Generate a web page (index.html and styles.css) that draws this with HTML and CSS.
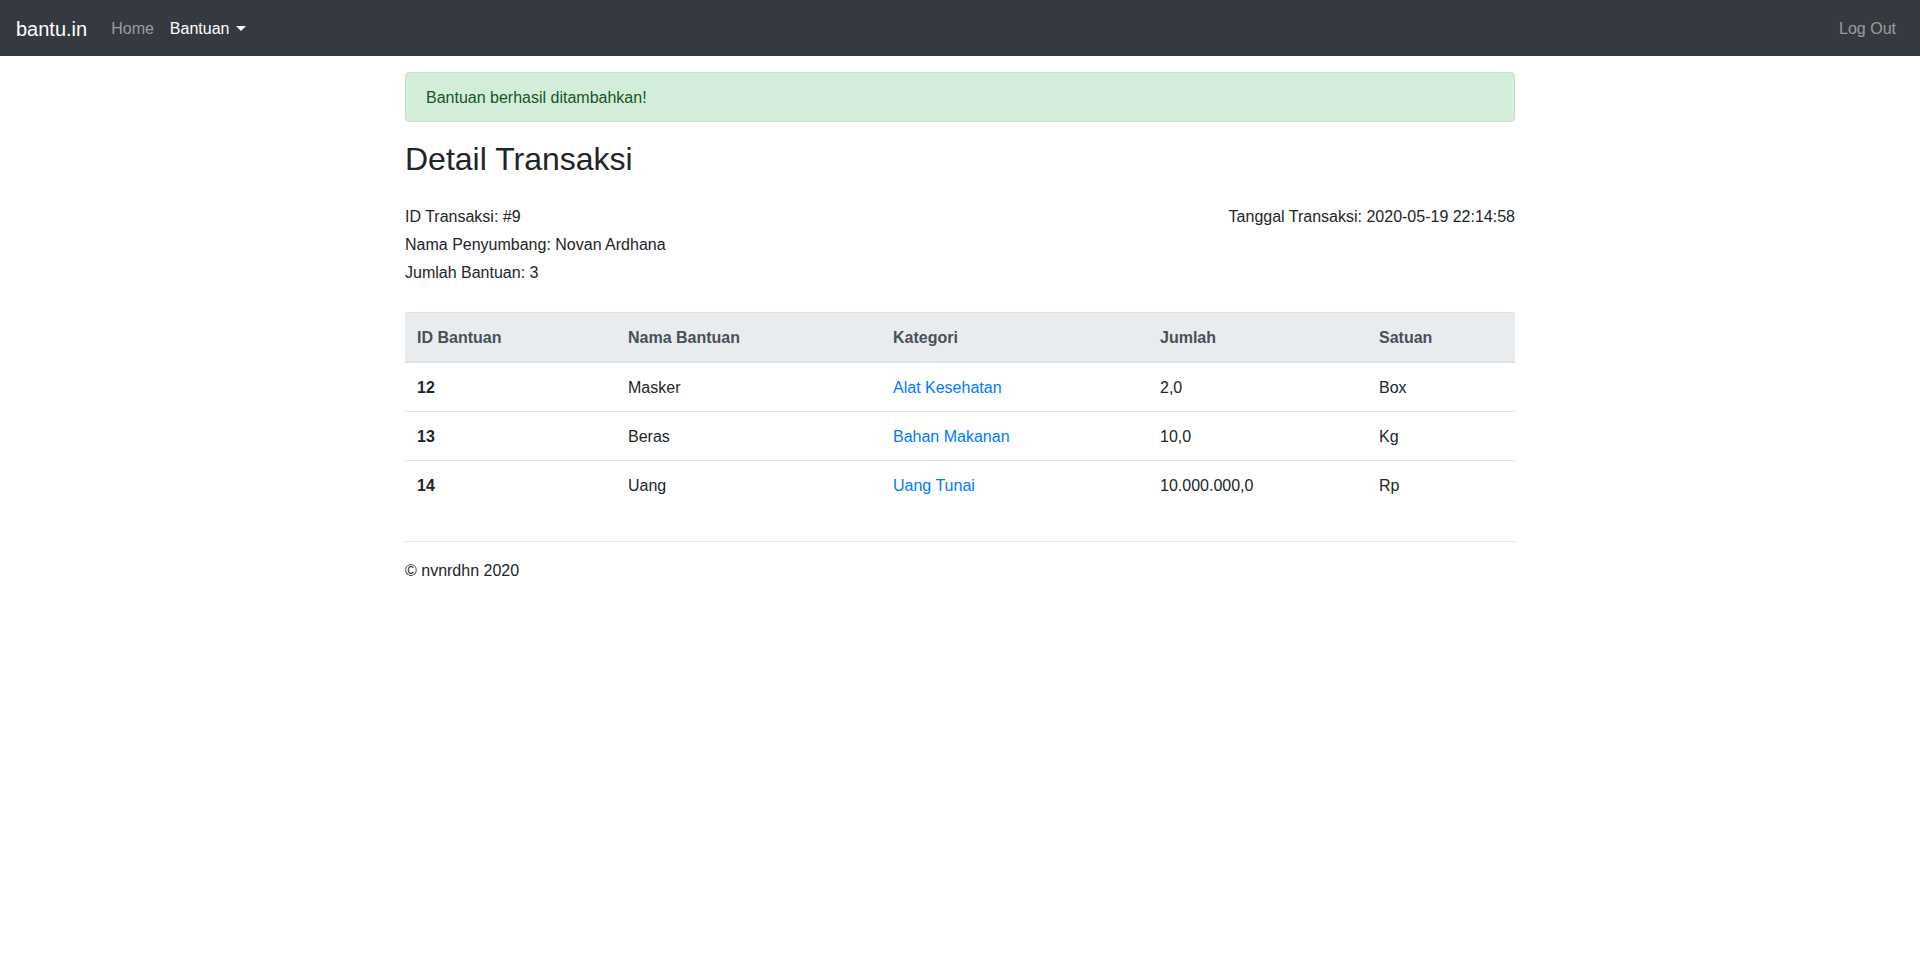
FILE: index.html
```html
<!DOCTYPE html>
<html lang="id">
<head>
<meta charset="utf-8">
<title>bantu.in</title>
<link rel="stylesheet" href="styles.css">
</head>
<body>
<nav class="navbar">
  <div class="nav-left">
    <a class="brand" href="#">bantu.in</a>
    <a class="nav-link" href="#">Home</a>
    <a class="nav-link active" href="#">Bantuan<span class="caret"></span></a>
  </div>
  <a class="nav-link" href="#">Log Out</a>
</nav>
<main class="container">
  <div class="alert">Bantuan berhasil ditambahkan!</div>
  <h2 class="title">Detail Transaksi</h2>
  <div class="info">
    <div class="info-col">
      <p>ID Transaksi: #9</p>
      <p>Nama Penyumbang: Novan Ardhana</p>
      <p>Jumlah Bantuan: 3</p>
    </div>
    <div class="info-col">
      <p>Tanggal Transaksi: 2020-05-19 22:14:58</p>
    </div>
  </div>
  <table class="table">
    <thead>
      <tr>
        <th class="c1">ID Bantuan</th>
        <th class="c2">Nama Bantuan</th>
        <th class="c3">Kategori</th>
        <th class="c4">Jumlah</th>
        <th class="c5">Satuan</th>
      </tr>
    </thead>
    <tbody>
      <tr><th>12</th><td>Masker</td><td><a href="#">Alat Kesehatan</a></td><td>2,0</td><td>Box</td></tr>
      <tr><th>13</th><td>Beras</td><td><a href="#">Bahan Makanan</a></td><td>10,0</td><td>Kg</td></tr>
      <tr><th>14</th><td>Uang</td><td><a href="#">Uang Tunai</a></td><td>10.000.000,0</td><td>Rp</td></tr>
    </tbody>
  </table>
  <hr class="rule">
  <footer class="footer">© nvnrdhn 2020</footer>
</main>
</body>
</html>
```
FILE: styles.css
```css
* { box-sizing: border-box; }
body {
  margin: 0;
  font-family: "Liberation Sans", Arial, sans-serif;
  font-size: 16px;
  line-height: 1.5;
  color: #212529;
  background: #fff;
}
a { text-decoration: none; }
.navbar {
  background: #343a40;
  height: 56px;
  padding: 8px 16px;
  display: flex;
  align-items: center;
  justify-content: space-between;
}
.nav-left { display: flex; align-items: center; }
.brand {
  color: #fff;
  font-size: 20px;
  line-height: 30px;
  padding: 6px 0 4px;
  margin-right: 16px;
}
.nav-link {
  color: rgba(255,255,255,.5);
  padding: 9px 8px 7px;
  line-height: 24px;
}
.nav-link.active { color: #fff; }
.caret {
  display: inline-block;
  margin-left: 7px;
  vertical-align: 3px;
  border-top: 5px solid #fff;
  border-left: 5px solid transparent;
  border-right: 5px solid transparent;
}
.container {
  width: 1110px;
  margin: 0 auto;
}
.alert {
  margin: 16px 0;
  padding: 13px 20px 11px;
  background: #d4edda;
  border: 1px solid #c3e6cb;
  border-radius: 4px;
  color: #155724;
}
.title {
  font-size: 32px;
  font-weight: 500;
  line-height: 1.2;
  margin: 0 0 27px;
  padding-top: 2px;
}
.info {
  display: flex;
  justify-content: space-between;
  margin-bottom: 23px;
}
.info p { margin: 0 0 4px; }
.table {
  width: 100%;
  border-collapse: collapse;
  margin-bottom: 32px;
}
.table th, .table td {
  padding: 13px 12px 11px;
  text-align: left;
  vertical-align: top;
  border-top: 1px solid #dee2e6;
}
.table thead th {
  background: #e9ecef;
  color: #495057;
  border-bottom: 2px solid #dee2e6;
  font-weight: bold;
}
.table tbody th { font-weight: bold; }
.table a { color: #007bff; }
.c1 { width: 211px; }
.c2 { width: 265px; }
.c3 { width: 267px; }
.c4 { width: 219px; }
.rule {
  margin: 16px 0;
  border: 0;
  border-top: 1px solid rgba(0,0,0,.1);
}
.footer { line-height: 24px; padding-top: 1px; }
```
